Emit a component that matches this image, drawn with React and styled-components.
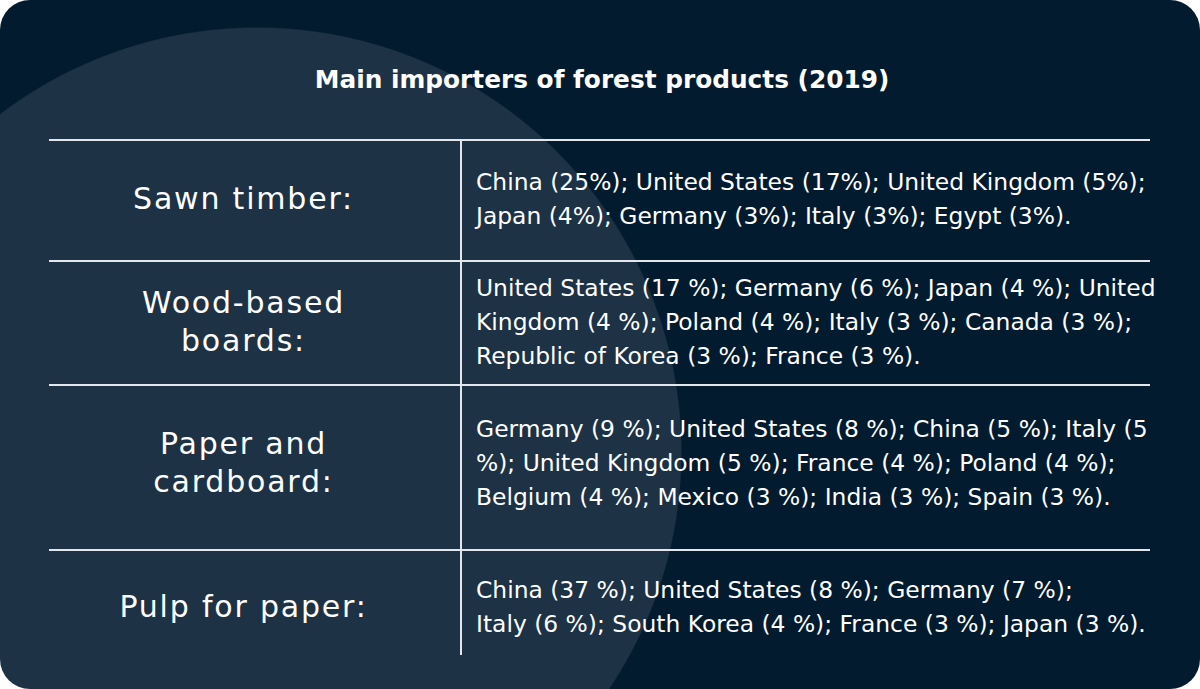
import React from "react";
import styled, { createGlobalStyle } from "styled-components";

const GlobalStyle = createGlobalStyle`
  html, body { margin: 0; padding: 0; background: #ffffff; }
  body { font-family: "DejaVu Sans", "Liberation Sans", sans-serif; }
`;

const Card = styled.div`
  width: 1200px;
  height: 689px;
  border-radius: 30px;
  overflow: hidden;
  box-sizing: border-box;
  background: radial-gradient(circle 425px at 257px 452px, #1e3246 99.7%, #031b2e 100%);
  color: #ffffff;
  display: flex;
  flex-direction: column;
  padding: 0 50px 0 49px;
`;

const Title = styled.h1`
  margin: 0;
  height: 139px;
  display: flex;
  align-items: center;
  justify-content: center;
  padding-left: 5px;
  padding-top: 19px;
  box-sizing: border-box;
  font-family: "DejaVu Sans", sans-serif;
  font-weight: 700;
  font-size: 24.8px;
`;

const Table = styled.div`
  display: flex;
  flex-direction: column;
`;

const Row = styled.div`
  display: grid;
  grid-template-columns: 413px 1fr;
  height: ${(p) => p.$h}px;
  border-top: 2px solid #e3e7eb;
  box-sizing: border-box;
`;

const Label = styled.div`
  display: flex;
  align-items: center;
  justify-content: center;
  text-align: center;
  padding: ${(p) => p.$pad || "0"};
  padding-right: 22px;
  border-right: 2px solid #e3e7eb;
  font-size: 30px;
  letter-spacing: 1.8px;
  line-height: 38px;
  font-weight: 400;
`;

const Values = styled.div`
  display: flex;
  align-items: center;
  padding: ${(p) => p.$pad || "0"};
  padding-left: 14px;
  font-size: 23.4px;
  line-height: 34px;
  white-space: nowrap;
`;

const rows = [
  {
    h: 121,
    pad: "0 0 3px 0",
    label: ["Sawn timber:"],
    values: [
      "China (25%); United States (17%); United Kingdom (5%);",
      "Japan (4%); Germany (3%); Italy (3%); Egypt (3%).",
    ],
  },
  {
    h: 124,
    pad: "0 0 2px 0",
    label: ["Wood-based", "boards:"],
    values: [
      "United States (17 %); Germany (6 %); Japan (4 %); United",
      "Kingdom (4 %); Poland (4 %); Italy (3 %); Canada (3 %);",
      "Republic of Korea (3 %); France (3 %).",
    ],
  },
  {
    h: 165,
    pad: "0 0 10px 0",
    label: ["Paper and", "cardboard:"],
    values: [
      "Germany (9 %); United States (8 %); China (5 %); Italy (5",
      "%); United Kingdom (5 %); France (4 %); Poland (4 %);",
      "Belgium (4 %); Mexico (3 %); India (3 %); Spain (3 %).",
    ],
  },
  {
    h: 106,
    pad: "8px 0 0 0",
    label: ["Pulp for paper:"],
    values: [
      "China (37 %); United States (8 %); Germany (7 %);",
      "Italy (6 %); South Korea (4 %); France (3 %); Japan (3 %).",
    ],
  },
];

const Lines = ({ lines }) => (
  <div>
    {lines.map((l, i) => (
      <React.Fragment key={i}>
        {l}
        {i < lines.length - 1 && <br />}
      </React.Fragment>
    ))}
  </div>
);

export default function App() {
  return (
    <>
      <GlobalStyle />
      <Card>
        <Title>Main importers of forest products (2019)</Title>
        <Table>
          {rows.map((r, i) => (
            <Row key={i} $h={r.h}>
              <Label $pad={r.pad}>
                <Lines lines={r.label} />
              </Label>
              <Values $pad={r.pad}>
                <Lines lines={r.values} />
              </Values>
            </Row>
          ))}
        </Table>
      </Card>
    </>
  );
}
